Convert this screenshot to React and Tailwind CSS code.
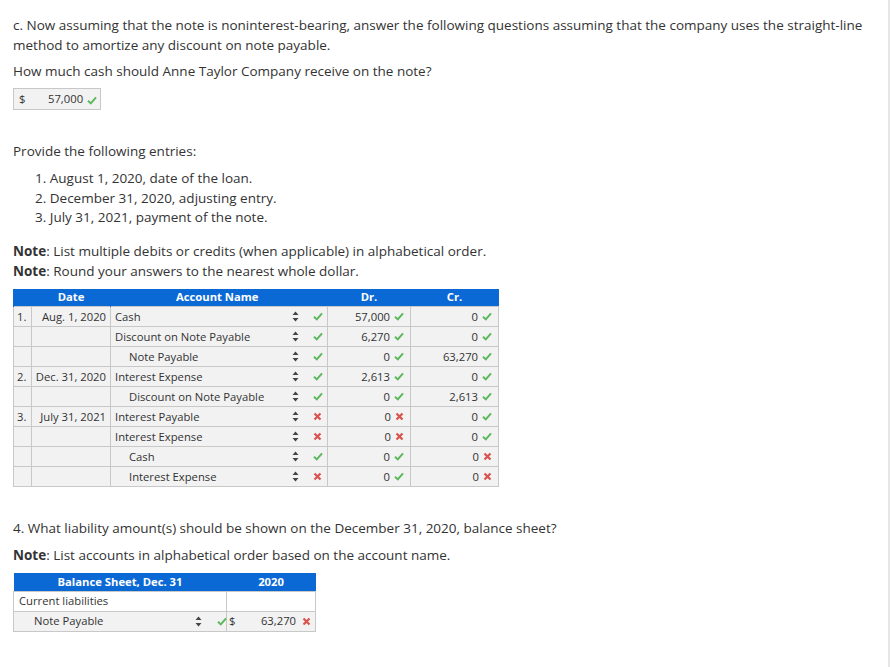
import React from 'react';

const Check = () => (
  <svg width="10" height="9" viewBox="0 0 10 9" className="inline-block">
    <path d="M1 4.8 L3.8 7.4 L9 1.4" fill="none" stroke="#5cb85c" strokeWidth="2" />
  </svg>
);

const Cross = () => (
  <svg width="9" height="9" viewBox="0 0 9 9" className="inline-block">
    <path d="M1.5 1.5 L7.5 7.5 M7.5 1.5 L1.5 7.5" fill="none" stroke="#d9534f" strokeWidth="2.2" />
  </svg>
);

const Mark = ({ ok }) => (ok ? <Check /> : <Cross />);

const Arrows = () => (
  <svg width="7" height="11" viewBox="0 0 7 11" className="inline-block">
    <path d="M3.5 0.5 L6.5 4 L0.5 4 Z" fill="#444" />
    <path d="M3.5 10.5 L6.5 7 L0.5 7 Z" fill="#444" />
  </svg>
);

const rows = [
  { n: '1.', date: 'Aug. 1, 2020', acct: 'Cash', indent: false, a: true, dr: '57,000', drOk: true, cr: '0', crOk: true },
  { acct: 'Discount on Note Payable', indent: false, a: true, dr: '6,270', drOk: true, cr: '0', crOk: true },
  { acct: 'Note Payable', indent: true, a: true, dr: '0', drOk: true, cr: '63,270', crOk: true },
  { n: '2.', date: 'Dec. 31, 2020', acct: 'Interest Expense', indent: false, a: true, dr: '2,613', drOk: true, cr: '0', crOk: true },
  { acct: 'Discount on Note Payable', indent: true, a: true, dr: '0', drOk: true, cr: '2,613', crOk: true },
  { n: '3.', date: 'July 31, 2021', acct: 'Interest Payable', indent: false, a: false, dr: '0', drOk: false, cr: '0', crOk: true },
  { acct: 'Interest Expense', indent: false, a: false, dr: '0', drOk: false, cr: '0', crOk: true },
  { acct: 'Cash', indent: true, a: true, dr: '0', drOk: true, cr: '0', crOk: false },
  { acct: 'Interest Expense', indent: true, a: false, dr: '0', drOk: true, cr: '0', crOk: false },
];

const cell = 'border border-[#c8c8c8] h-[20px] p-0';

export default function App() {
  return (
    <div className="w-[890px] h-[667px] bg-white border-r-2 border-[#e6e6e6] text-[#333] font-['Open_Sans',sans-serif] overflow-hidden">
      <div className="pl-[13px] pt-[15px] text-[13.5px] leading-[20px]">
        <p className="w-[860px]">c. Now assuming that the note is noninterest-bearing, answer the following questions assuming that the company uses the straight-line method to amortize any discount on note payable.</p>
        <p className="mt-[6px]">How much cash should Anne Taylor Company receive on the note?</p>

        <div className="mt-[7px] w-[88px] h-[22px] bg-[#f2f2f2] border border-[#c8c8c8] flex items-center text-[11.25px]">
          <span className="pl-[5px] w-[34px]">$</span>
          <span>57,000</span>
          <span className="ml-[4px] mt-[1px]"><Check /></span>
        </div>

        <p className="mt-[31px]">Provide the following entries:</p>
        <ol className="mt-[8px] pl-[22px] leading-[19.5px]">
          <li>1. August 1, 2020, date of the loan.</li>
          <li>2. December 31, 2020, adjusting entry.</li>
          <li>3. July 31, 2021, payment of the note.</li>
        </ol>

        <p className="mt-[13px]"><b>Note</b>: List multiple debits or credits (when applicable) in alphabetical order.</p>
        <p><b>Note</b>: Round your answers to the nearest whole dollar.</p>

        <table className="mt-[8px] border-collapse text-[11.25px] leading-[14px] table-fixed w-[485px]">
          <colgroup>
            <col className="w-[18px]" />
            <col className="w-[79px]" />
            <col className="w-[217px]" />
            <col className="w-[83px]" />
            <col className="w-[88px]" />
          </colgroup>
          <thead>
            <tr className="bg-[#0b69d6] text-white font-bold h-[18px]">
              <th colSpan={2} className="border-x border-[#0b69d6] text-center pl-[18px]">Date</th>
              <th className="text-center pr-[4px]">Account Name</th>
              <th className="text-center">Dr.</th>
              <th className="text-center">Cr.</th>
            </tr>
          </thead>
          <tbody className="bg-[#f2f2f2]">
            {rows.map((r, i) => (
              <tr key={i}>
                <td className={`${cell} pl-[3px]`}>{r.n}</td>
                <td className={`${cell} text-right pr-[4px]`}>{r.date}</td>
                <td className={cell}>
                  <div className="flex items-center pr-[4px]">
                    <span className={`flex-1 ${r.indent ? 'pl-[18px]' : 'pl-[4px]'}`}>{r.acct}</span>
                    <span className="w-[8px] flex"><Arrows /></span>
                    <span className="ml-[13px] w-[10px] flex"><Mark ok={r.a} /></span>
                  </div>
                </td>
                <td className={cell}>
                  <div className="flex items-center justify-end pr-[6px] gap-[4px]">
                    <span>{r.dr}</span>
                    <Mark ok={r.drOk} />
                  </div>
                </td>
                <td className={cell}>
                  <div className="flex items-center justify-end pr-[6px] gap-[4px]">
                    <span>{r.cr}</span>
                    <Mark ok={r.crOk} />
                  </div>
                </td>
              </tr>
            ))}
          </tbody>
        </table>

        <p className="mt-[31px]">4. What liability amount(s) should be shown on the December 31, 2020, balance sheet?</p>
        <p className="mt-[7px]"><b>Note</b>: List accounts in alphabetical order based on the account name.</p>

        <table className="mt-[8px] border-collapse text-[11.25px] leading-[14px] table-fixed w-[302px]">
          <colgroup>
            <col className="w-[213px]" />
            <col className="w-[89px]" />
          </colgroup>
          <thead>
            <tr className="bg-[#0b69d6] text-white font-bold h-[18px]">
              <th className="text-center">Balance Sheet, Dec. 31</th>
              <th className="text-center">2020</th>
            </tr>
          </thead>
          <tbody>
            <tr className="bg-white">
              <td className={`${cell} pl-[5px]`}>Current liabilities</td>
              <td className={cell}></td>
            </tr>
            <tr className="bg-[#f2f2f2]">
              <td className={cell}>
                <div className="flex items-center">
                  <span className="flex-1 pl-[20px]">Note Payable</span>
                  <span className="w-[8px] flex"><Arrows /></span>
                  <span className="ml-[14px] w-[10px] mr-[-1px] flex"><Check /></span>
                </div>
              </td>
              <td className={cell}>
                <div className="flex items-center pl-[2px] pr-[4px]">
                  <span>$</span>
                  <span className="flex-1 text-right pr-[6px]">63,270</span>
                  <Cross />
                </div>
              </td>
            </tr>
          </tbody>
        </table>
      </div>
    </div>
  );
}
